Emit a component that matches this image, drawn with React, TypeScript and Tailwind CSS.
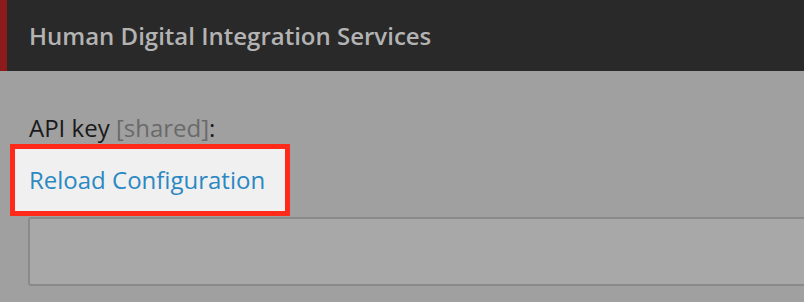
export default function App() {
  return (
    <div className="w-[804px] h-[302px] overflow-hidden bg-[#a0a0a0]" style={{ fontFamily: '"Open Sans", sans-serif' }}>
      <div className="h-[71px] bg-[#292929] border-l-[7px] border-[#8e1b1b] flex items-center pl-[22px]">
        <span className="text-[24px] font-semibold text-[#b3b3b3] leading-none">Human Digital Integration Services</span>
      </div>
      <div className="pt-[40px]">
        <div className="pl-[29px] text-[24px] leading-[33px] text-[#1a1a1a]">
          API key <span className="text-[#6a6a6a]">[shared]</span>:
        </div>
        <div className="ml-[10px] w-[280px] h-[72px] border-[5px] border-[#ff2a1a] bg-[#f0f0f0] flex items-center pl-[14px]">
          <span className="text-[24px] text-[#2b88c3]">Reload Configuration</span>
        </div>
        <div className="ml-[28px] mt-[1px] h-[69px] border-2 border-[#8a8a8a] rounded-[3px] bg-[#a8a8a8] w-[800px]" />
      </div>
    </div>
  );
}
